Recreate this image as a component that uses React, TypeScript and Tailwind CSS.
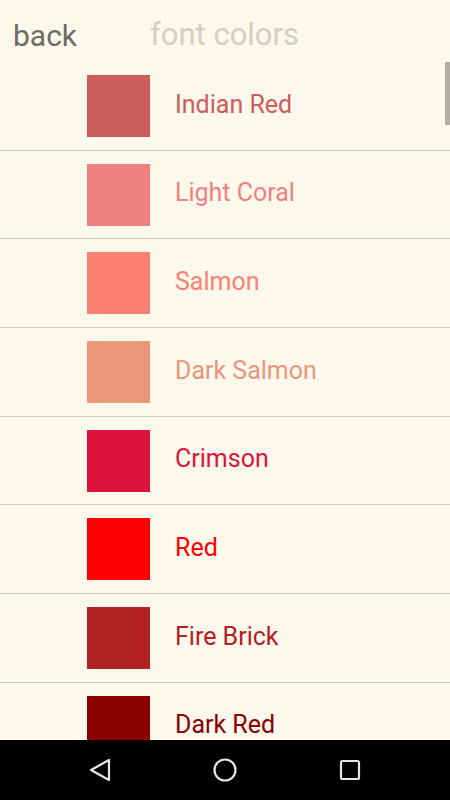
import React from "react";

const colors = [
  { name: "Indian Red", hex: "#CD5C5C" },
  { name: "Light Coral", hex: "#F08080" },
  { name: "Salmon", hex: "#FA8072" },
  { name: "Dark Salmon", hex: "#E9967A" },
  { name: "Crimson", hex: "#DC143C" },
  { name: "Red", hex: "#FF0000" },
  { name: "Fire Brick", hex: "#B22222" },
  { name: "Dark Red", hex: "#8B0000" },
];

export default function App() {
  return (
    <div className="w-[450px] h-[800px] flex flex-col bg-[#fcf8ec] overflow-hidden font-['Roboto',sans-serif]">
      {/* Header */}
      <div className="h-[62px] shrink-0 flex items-center pl-[13px] pt-[8px]">
        <span className="text-[30px] text-[#6f6b64] w-[137px]">back</span>
        <span className="text-[31px] text-[#d5cdc2]">font colors</span>
      </div>

      {/* List */}
      <div className="relative flex-1 overflow-hidden">
        {colors.map((c) => (
          <div
            key={c.name}
            className="h-[88.7px] flex items-center border-b border-[#cfc7ba]"
          >
            <div
              className="ml-[87px] w-[63px] h-[62px] shrink-0"
              style={{ backgroundColor: c.hex }}
            />
            <span
              className="ml-[25px] text-[25px] -mt-[3px]"
              style={{ color: c.hex }}
            >
              {c.name}
            </span>
          </div>
        ))}
        {/* scrollbar */}
        <div className="absolute right-0 top-0 w-[5px] h-[63px] bg-[#b2aea3]" />
      </div>

      {/* Android nav bar */}
      <div className="h-[60px] shrink-0 bg-black flex items-center justify-center gap-[101px]">
        <svg width="24" height="24" viewBox="0 0 24 24">
          <path d="M21 2 L21 22 L3 12 Z" fill="none" stroke="#e6e6e6" strokeWidth="2.2" strokeLinejoin="round" />
        </svg>
        <svg width="24" height="24" viewBox="0 0 24 24">
          <circle cx="12" cy="12" r="10.5" fill="none" stroke="#e6e6e6" strokeWidth="2.2" />
        </svg>
        <svg width="24" height="24" viewBox="0 0 24 24">
          <rect x="3" y="3" width="18" height="18" rx="1.5" fill="none" stroke="#e6e6e6" strokeWidth="2.2" />
        </svg>
      </div>
    </div>
  );
}
